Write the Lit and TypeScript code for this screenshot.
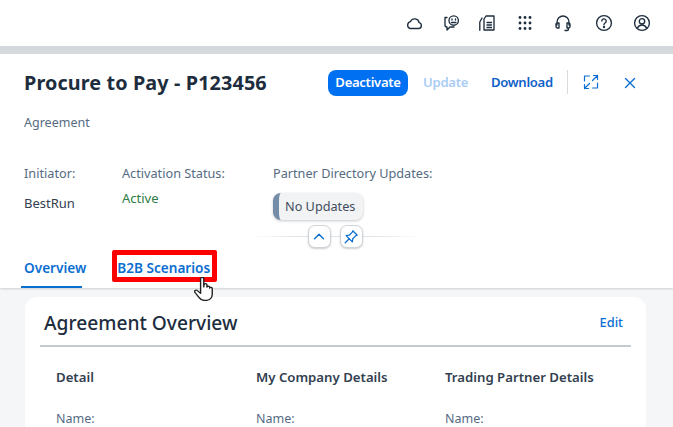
import { LitElement, html, css, svg } from "lit";
import { customElement } from "lit/decorators.js";

const ic = (body: unknown, size = 18, vb = 18, sw = 1.2) =>
  html`<svg class="ic" width=${size} height=${size} viewBox="0 0 ${vb} ${vb}" fill="none" stroke="currentColor" stroke-width=${sw} stroke-linecap="round" stroke-linejoin="round">${body}</svg>`;

@customElement("app-root")
export class AppRoot extends LitElement {
  static styles = css`
    :host { display: block; width: 673px; height: 427px; overflow: hidden; background: #f5f6f7; font-family: "Noto Sans", "Open Sans", sans-serif; color: #32363a; font-size: 14px; }
    * { box-sizing: border-box; }
    .top { height: 46px; background: #fff; display: flex; align-items: center; color: #1d2d3e; padding-left: 405px; }
    .top .slots { display: grid; grid-template-columns: 37px 36px 38px 38px 41px 38px 18px; }
    .ic { display: block; }
    .band { height: 8px; background: linear-gradient(#d3d6da, #d8dbde); }
    .head { background: #fff; height: 234px; padding: 14px 0 0 24px; position: relative; box-shadow: 0 1px 2px rgba(0,0,0,.16); }
    .titlerow { display: flex; align-items: center; height: 28px; }
    h1 { margin: 0; width: 304px; font-size: 19.8px; font-weight: 700; color: #1d2d3e; letter-spacing: .12px; white-space: nowrap; }
    .btn { font-size: 13.1px; font-weight: 600; white-space: nowrap; letter-spacing: -.3px; color: #0a6ed1; }
    .primary { width: 80px; height: 26px; background: #0070f2; color: #fff; border-radius: 8px; display: flex; align-items: center; justify-content: center; position: relative; top: 1px; padding-bottom: 2px; }
    .disabled { color: #a9cdf5; margin-left: 15px; width: 44px; }
    .dl { margin-left: 24px; width: 61px; color: #0f62c8; }
    .sep { width: 1px; height: 24px; background: #d9dcdf; margin-left: 15px; }
    .act { color: #0a6ed1; }
    .exp { margin-left: 14px; }
    .close { margin-left: 21px; position: relative; top: 1px; }
    .sub { margin-top: 18px; font-size: 12.5px; color: #556b82; line-height: 18px; }
    .attrs { margin-top: 32px; display: grid; grid-template-columns: 98px 151px auto; font-size: 12.7px; color: #556b82; }
    .attrs .lab { line-height: 18px; }
    .val { color: #32404f; line-height: 18px; margin-top: 12px; font-size: 13px; }
    .active { color: #2d7d46; margin-top: 7px; }
    .tag { margin-top: 11px; width: 90px; height: 27px; background: #f2f3f5; border-left: 6px solid #748ca8; border-radius: 8px; box-shadow: 0 1px 3px rgba(0,0,0,.22); display: flex; align-items: center; padding: 0 0 2px 6px; color: #3f4d5c; }
    .tools { position: absolute; left: 250px; width: 170px; top: 171px; height: 23px; display: flex; align-items: center; justify-content: center; gap: 9px; background: linear-gradient(90deg, transparent, #e3e6e9 25%, #e3e6e9 75%, transparent) center / 100% 1px no-repeat; }
    .tool { width: 23px; height: 23px; background: #fff; border-radius: 7px; border: 1px solid #cfd4d9; box-shadow: 0 1px 2px rgba(0,0,0,.2); display: flex; align-items: center; justify-content: center; color: #0a6ed1; }
    .tabs { position: absolute; left: 24px; top: 188px; height: 46px; display: flex; gap: 31px; font-size: 13.6px; font-weight: 600; color: #0a6ed1; }
    .tab { position: relative; display: flex; align-items: center; padding-top: 4px; height: 46px; white-space: nowrap; }
    .tab.sel::after { content: ""; position: absolute; left: -3px; width: 61px; bottom: 0; height: 2px; background: #0a6ed1; }
    .mark { position: absolute; left: -5px; right: -7px; top: 8px; bottom: 6px; border: 5px solid #f00; border-radius: 2px; }
    .cursor { position: absolute; left: 77px; top: 35px; }
    .card { margin: 9px 0 0 25px; width: 621px; height: 200px; background: #fff; border-radius: 12px; padding: 0 15px; }
    .cardhead { height: 50px; padding: 2px 8px 0 4px; border-bottom: 2px solid #c5cad0; display: flex; align-items: center; justify-content: space-between; width: 591px; }
    h2 { margin: 0; font-size: 19.2px; font-weight: 500; color: #1d2d3e; }
    .edit { font-size: 12.8px; font-weight: 500; color: #0a6ed1; }
    .cols { display: grid; grid-template-columns: 200px 189px auto; padding: 21px 0 0 16px; font-size: 13.2px; }
    .cols b { font-weight: 600; color: #32404f; display: block; line-height: 18px; }
    .cols span { display: block; color: #556b82; margin-top: 24px; line-height: 18px; font-size: 12.5px; }
  `;
  render() {
    const icons = [
      svg`<path d="M5 14.500h8.500a3 3 0 0 0 .6-5.900 4.500 4.500 0 0 0-8.600-1A3.600 3.600 0 0 0 5 14.500z"/>`,
      svg`<path d="M5 3.500H3v7.500a2 2 0 0 0 2 2v3l3-3h4M7 6.500a4.700 4.700 0 1 1 9.400 0 4.700 4.700 0 0 1-9.400 0zM9.500 8.500h4.400M10 5v1M13.500 5v1"/>`,
      svg`<path d="M8 2h8v14H6V5zM4 4 1.800 8v8.300M9 8.500h4.500M9 11h4.500M9 13.500h4.500"/>`,
      svg`<g fill="currentColor" stroke="none"><circle cx="4" cy="3.500" r="1.400"/><circle cx="9" cy="3.500" r="1.400"/><circle cx="14" cy="3.500" r="1.400"/><circle cx="4" cy="9" r="1.400"/><circle cx="9" cy="9" r="1.400"/><circle cx="14" cy="9" r="1.400"/><circle cx="4" cy="14.500" r="1.400"/><circle cx="9" cy="14.500" r="1.400"/><circle cx="14" cy="14.500" r="1.400"/></g>`,
      svg`<path d="M3 11V8a6 6 0 0 1 12 0v3M3 9h2v5H3.500A1.500 1.500 0 0 1 2 12.500v-2A1.500 1.500 0 0 1 3 9zM15 9h-2v5h1.500a1.500 1.500 0 0 0 1.500-1.500v-2A1.500 1.500 0 0 0 15 9zM14.500 14v1a1.500 1.500 0 0 1-1.500 1.500h-2"/>`,
      svg`<circle cx="9" cy="9" r="7.400"/><path d="M6.800 7a2.200 2.200 0 1 1 3.300 2c-.8.5-1.100.9-1.100 1.700"/><circle cx="9" cy="13" r=".5" fill="currentColor"/>`,
      svg`<circle cx="9" cy="9" r="7.400"/><circle cx="9" cy="7.300" r="2.700"/><path d="M4.300 14.300c1-2.200 2.700-3.300 4.700-3.300s3.700 1.100 4.700 3.300"/>`,
    ];
    return html`
      <div class="top"><div class="slots">${icons.map((i) => ic(i, 18, 18, 1.35))}</div></div>
      <div class="band"></div>
      <div class="head">
        <div class="titlerow">
          <h1>Procure to Pay - P123456</h1>
          <div class="btn primary">Deactivate</div>
          <div class="btn disabled">Update</div>
          <div class="btn dl">Download</div>
          <div class="sep"></div>
          <div class="act exp">${ic(svg`<path d="M2.500 8V3h5M15.500 10v5h-5M10.500 7.500 15.500 2.500m0 0h-4m4 0v4M7.500 10.500l-5 5m0 0h4m-4 0v-4"/>`)}</div>
          <div class="act close">${ic(svg`<path d="m4.500 4.500 9 9M13.500 4.500l-9 9" stroke-width="1.400"/>`)}</div>
        </div>
        <div class="sub">Agreement</div>
        <div class="attrs">
          <div><div class="lab">Initiator:</div><div class="val">BestRun</div></div>
          <div><div class="lab">Activation Status:</div><div class="val active">Active</div></div>
          <div><div class="lab">Partner Directory Updates:</div><div class="tag">No Updates</div></div>
        </div>
        <div class="tools">
          <div class="tool">${ic(svg`<path d="m4 11 5-5 5 5" stroke-width="1.600"/>`, 16)}</div>
          <div class="tool">${ic(svg`<path d="m11 2 5 5-1.500.5-3.500 3.500-.5 3.500L7 11 2.500 15.500 7 11 3.500 7.500 7 7l3.500-3.500z" stroke-width="1.400"/>`, 16)}</div>
        </div>
        <div class="tabs">
          <div class="tab sel">Overview</div>
          <div class="tab">B2B Scenarios<div class="mark"></div>
            <svg class="cursor" width="19" height="24" viewBox="1.300 1 15 22" preserveAspectRatio="none" fill="#fff" stroke="#222" stroke-width="1.100" stroke-linejoin="round"><path d="M6.500 2.500c0-1.500 2.500-1.500 2.500 0V10l.2-2c.3-1.300 2.100-1.200 2.300 0v2.200c.2-1.200 2-1.100 2.200 0v1c.3-1 2-.8 2 .5V17c0 3-2 5.500-5 5.500H9.500c-2 0-3.300-1-4.500-3L2 15c-.9-1.300.8-2.700 2-1.500l2.500 2.500z"/></svg>
          </div>
        </div>
      </div>
      <div class="card">
        <div class="cardhead"><h2>Agreement Overview</h2><div class="edit">Edit</div></div>
        <div class="cols">
          <div><b>Detail</b><span>Name:</span></div>
          <div><b>My Company Details</b><span>Name:</span></div>
          <div><b>Trading Partner Details</b><span>Name:</span></div>
        </div>
      </div>
    `;
  }
}
